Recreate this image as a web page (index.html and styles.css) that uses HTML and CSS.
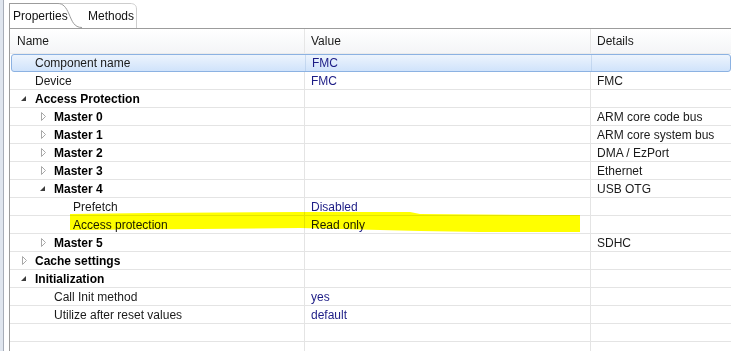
FILE: index.html
```html
<!DOCTYPE html>
<html>
<head>
<meta charset="utf-8">
<title>Properties</title>
<link rel="stylesheet" href="styles.css">
</head>
<body>
<div class="window">
  <div class="gutter"></div>
  <div class="view">
    <div class="tabs">
      <div class="tab tab-active">Properties</div>
      <svg class="tab-curve" width="24" height="25" viewBox="0 0 24 25">
        <path d="M0 0.5 H24" stroke="#cdcdcd" fill="none"/>
        <path d="M0 0.5 C5 0.5 8 4 11 11 S16 24.5 24 24.5" stroke="#9c9c9c" fill="#fff"/>
      </svg>
      <div class="tab">Methods</div>
      <svg class="tab-end" width="8" height="25" viewBox="0 0 8 25">
        <path d="M0 0.5 C4 0.5 6.5 2 6.5 6 V25" stroke="#cdcdcd" fill="none"/>
      </svg>
    </div>

    <div class="table">
      <div class="row head">
        <div class="cell">Name</div>
        <div class="cell">Value</div>
        <div class="cell">Details</div>
      </div>

      <div class="body">
        <div class="row sel">
          <div class="cell name"><span class="twisty"></span>Component name</div>
          <div class="cell val">FMC</div>
          <div class="cell"></div>
        </div>
        <div class="row">
          <div class="cell name"><span class="twisty"></span>Device</div>
          <div class="cell val">FMC</div>
          <div class="cell">FMC</div>
        </div>
        <div class="row">
          <div class="cell name group"><span class="twisty"><svg width="9" height="9"><polygon points="5,2 5,7 0,7" fill="#3c3c3c"/></svg></span>Access Protection</div>
          <div class="cell val"></div>
          <div class="cell"></div>
        </div>
        <div class="row">
          <div class="cell name group lvl1"><span class="twisty"><svg width="9" height="9"><polygon points="1.5,0.5 5.5,4.5 1.5,8.5" fill="#fff" stroke="#a8a8a8"/></svg></span>Master 0</div>
          <div class="cell val"></div>
          <div class="cell">ARM core code bus</div>
        </div>
        <div class="row">
          <div class="cell name group lvl1"><span class="twisty"><svg width="9" height="9"><polygon points="1.5,0.5 5.5,4.5 1.5,8.5" fill="#fff" stroke="#a8a8a8"/></svg></span>Master 1</div>
          <div class="cell val"></div>
          <div class="cell">ARM core system bus</div>
        </div>
        <div class="row">
          <div class="cell name group lvl1"><span class="twisty"><svg width="9" height="9"><polygon points="1.5,0.5 5.5,4.5 1.5,8.5" fill="#fff" stroke="#a8a8a8"/></svg></span>Master 2</div>
          <div class="cell val"></div>
          <div class="cell">DMA / EzPort</div>
        </div>
        <div class="row">
          <div class="cell name group lvl1"><span class="twisty"><svg width="9" height="9"><polygon points="1.5,0.5 5.5,4.5 1.5,8.5" fill="#fff" stroke="#a8a8a8"/></svg></span>Master 3</div>
          <div class="cell val"></div>
          <div class="cell">Ethernet</div>
        </div>
        <div class="row">
          <div class="cell name group lvl1"><span class="twisty"><svg width="9" height="9"><polygon points="5,2 5,7 0,7" fill="#3c3c3c"/></svg></span>Master 4</div>
          <div class="cell val"></div>
          <div class="cell">USB OTG</div>
        </div>
        <div class="row">
          <div class="cell name lvl2"><span class="twisty"></span>Prefetch</div>
          <div class="cell val">Disabled</div>
          <div class="cell"></div>
        </div>
        <div class="row">
          <div class="cell name lvl2"><span class="twisty"></span>Access protection</div>
          <div class="cell val">Read only</div>
          <div class="cell"></div>
        </div>
        <div class="row">
          <div class="cell name group lvl1"><span class="twisty"><svg width="9" height="9"><polygon points="1.5,0.5 5.5,4.5 1.5,8.5" fill="#fff" stroke="#a8a8a8"/></svg></span>Master 5</div>
          <div class="cell val"></div>
          <div class="cell">SDHC</div>
        </div>
        <div class="row">
          <div class="cell name group"><span class="twisty"><svg width="9" height="9"><polygon points="1.5,0.5 5.5,4.5 1.5,8.5" fill="#fff" stroke="#a8a8a8"/></svg></span>Cache settings</div>
          <div class="cell val"></div>
          <div class="cell"></div>
        </div>
        <div class="row">
          <div class="cell name group"><span class="twisty"><svg width="9" height="9"><polygon points="5,2 5,7 0,7" fill="#3c3c3c"/></svg></span>Initialization</div>
          <div class="cell val"></div>
          <div class="cell"></div>
        </div>
        <div class="row">
          <div class="cell name lvl1"><span class="twisty"></span>Call Init method</div>
          <div class="cell val">yes</div>
          <div class="cell"></div>
        </div>
        <div class="row">
          <div class="cell name lvl1"><span class="twisty"></span>Utilize after reset values</div>
          <div class="cell val">default</div>
          <div class="cell"></div>
        </div>
        <div class="row">
          <div class="cell name"></div>
          <div class="cell val"></div>
          <div class="cell"></div>
        </div>
        <div class="row">
          <div class="cell name"></div>
          <div class="cell val"></div>
          <div class="cell"></div>
        </div>

        <!-- marker stroke drawn over the screenshot -->
        <div class="marker"></div>
      </div>
    </div>
  </div>
</div>
</body>
</html>
```

FILE: styles.css
```css
* { box-sizing: border-box; }
body { margin: 0; background: #fff; font-family: "Liberation Sans", Arial, sans-serif; font-size: 12px; color: #1a1a1a; overflow: hidden; }

.window { display: flex; height: 351px; overflow: hidden; }
.gutter { width: 4px; background: #dfe5ee; border-right: 1px solid #a7adb8; }
.view { flex: 1; margin-left: 5px; display: flex; flex-direction: column; min-width: 0; }

/* tabs */
.tabs { display: flex; height: 25px; margin-top: 3px; }
.tab { height: 25px; line-height: 24px; white-space: nowrap; color: #111; }
.tab-active { width: 49px; padding-left: 3px; border-left: 1px solid #9c9c9c; border-top: 1px solid #9c9c9c; background: #fff; overflow: visible; position: relative; z-index: 1; }
.tab-curve { display: block; }
.tab:not(.tab-active) { width: 48px; padding-left: 6px; border-top: 1px solid #cdcdcd; }
.tab-end { display: block; }

/* table */
.table { flex: 1; border-left: 1px solid #9c9c9c; border-top: 1px solid #9c9c9c; }
.row { display: grid; grid-template-columns: 295px 286px 1fr; height: 18px; border-bottom: 1px solid #e4e4e4; }
.cell { display: flex; align-items: center; padding-left: 6px; white-space: nowrap; overflow: hidden; border-right: 1px solid #e4e4e4; }
.cell:last-child { border-right: 0; }

.head { height: 25px; background: linear-gradient(#ffffff, #f4f5f7); border-bottom: 1px solid #ebebeb; }
.head .cell { padding-left: 6px; color: #1a1a1a; border-right-color: #e6e6e6; }
.head .cell:first-child { padding-left: 7px; }

.body { position: relative; }
.name { padding-left: 7px; }
.name.lvl1 { padding-left: 26px; }
.name.lvl2 { padding-left: 45px; }
.group { font-weight: bold; color: #000; }
.twisty { display: inline-flex; align-items: center; width: 18px; height: 17px; padding-left: 4px; flex: none; }
.twisty svg { display: block; }
.val { color: #1d1d86; }

.sel { margin-left: 1px; grid-template-columns: 294px 286px 1fr; border: 1px solid #8cb2e2; border-radius: 3px; background: linear-gradient(#edf4fd, #d0e3fb); }
.sel .cell { border-right-color: rgba(170, 196, 228, 0.5); }
.sel .name { padding-left: 5px; }

.marker {
  position: absolute; left: 60px; top: 157px; width: 510px; height: 22px;
  background: #ffff00; mix-blend-mode: multiply;
  clip-path: polygon(0 3px, 80px 2px, 230px 1px, 340px 1px, 350px 3px, 475px 4px, 510px 4px, 510px 21px, 410px 21px, 350px 20px, 270px 18px, 230px 17px, 130px 18px, 0 19px);
}
```
